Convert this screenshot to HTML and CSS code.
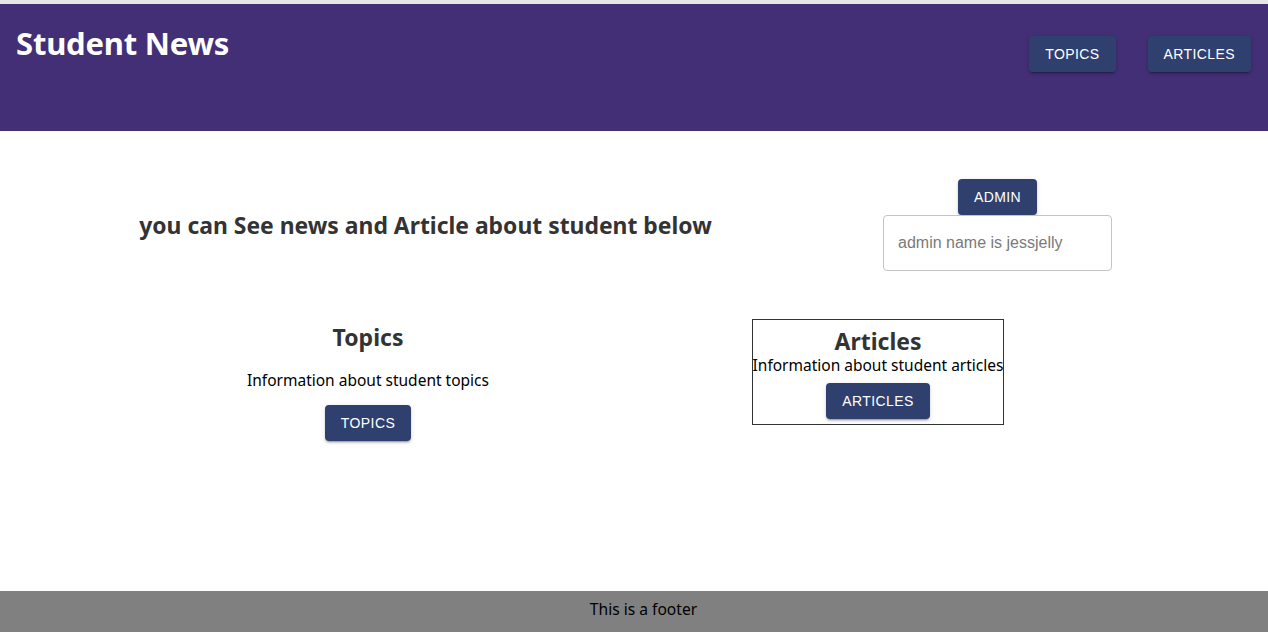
FILE: index.html
```html
<!DOCTYPE html>
<html lang="en">
<head>
<meta charset="utf-8">
<title>Student News</title>
<link rel="stylesheet" href="styles.css">
</head>
<body>
<div class="page">
  <div class="topline"></div>
  <header class="header">
    <h1 class="brand">Student News</h1>
    <nav class="nav">
      <button class="btn">Topics</button>
      <button class="btn">Articles</button>
    </nav>
  </header>
  <main class="main">
    <section class="intro">
      <h3 class="intro-title">you can See news and Article about student below</h3>
      <div class="admin">
        <button class="btn">Admin</button>
        <input class="admin-input" type="text" placeholder="admin name is jessjelly">
      </div>
    </section>
    <section class="cards">
      <div class="card">
        <h2 class="card-title">Topics</h2>
        <p class="card-text">Information about student topics</p>
        <button class="btn">Topics</button>
      </div>
      <div class="card-col">
        <div class="card card-boxed">
          <h2 class="card-title tight">Articles</h2>
          <p class="card-text tight">Information about student articles</p>
          <button class="btn">Articles</button>
        </div>
      </div>
    </section>
  </main>
  <footer class="footer">This is a footer</footer>
</div>
</body>
</html>
```

FILE: styles.css
```css
* { box-sizing: border-box; }
html, body { margin: 0; padding: 0; }
body {
  font-family: "Noto Sans", "Open Sans", sans-serif;
  color: #000;
  background: #fff;
}
.page {
  min-height: 632px;
  display: flex;
  flex-direction: column;
}
.topline {
  height: 4px;
  background: #e6e6e6;
}
.header {
  height: 127px;
  background: #432f75;
  display: flex;
  justify-content: space-between;
  align-items: flex-start;
  padding: 0 17px 0 16px;
}
.brand {
  margin: 21px 0 0;
  color: #fff;
  font-size: 31px;
  font-weight: 700;
  line-height: 36px;
  letter-spacing: -0.2px;
}
.nav {
  display: flex;
  gap: 32px;
  margin-top: 32px;
}
.btn {
  font-family: "Liberation Sans", Arial, sans-serif;
  font-size: 14px;
  font-weight: 400;
  letter-spacing: 0.4px;
  text-transform: uppercase;
  color: #fff;
  background: #2f406f;
  border: 0;
  border-radius: 4px;
  height: 36px;
  padding: 0 16px;
  box-shadow: 0 3px 1px -2px rgba(0,0,0,0.2), 0 2px 2px 0 rgba(0,0,0,0.14), 0 1px 5px 0 rgba(0,0,0,0.12);
  cursor: pointer;
}
.main {
  flex: 1;
}
.intro {
  display: grid;
  grid-template-columns: 573px 229px;
  column-gap: 171px;
  align-items: center;
  padding: 48px 0 0 139px;
}
.intro-title {
  margin: 0;
  text-align: center;
  white-space: nowrap;
  font-size: 22.9px;
  font-weight: 700;
  color: #333;
}
.admin {
  display: flex;
  flex-direction: column;
  align-items: center;
}
.admin-input {
  width: 229px;
  height: 56px;
  border: 1px solid #c4c4c4;
  border-radius: 4px;
  padding: 0 14px;
  font-family: "Liberation Sans", Arial, sans-serif;
  font-size: 16px;
  color: #333;
}
.admin-input::placeholder { color: #7a7a7a; opacity: 1; }
.cards {
  display: grid;
  grid-template-columns: 510px 510px;
  padding: 48px 0 0 113px;
  align-items: start;
}
.card {
  display: flex;
  flex-direction: column;
  align-items: center;
  text-align: center;
}
.card-col {
  display: flex;
  justify-content: center;
}
.card-boxed {
  width: 252px;
  border: 1px solid #333;
  padding: 7px 0 5px;
}
.card-title {
  margin: 3px 0 0;
  font-size: 23px;
  line-height: 30px;
  font-weight: 700;
  color: #333;
}
.card-text {
  margin: 17px 0 14px;
  font-size: 15.5px;
  line-height: 22px;
}
.card-title.tight { margin: 0; line-height: 28px; }
.card-text.tight { margin: 0 0 8px; line-height: 20px; white-space: nowrap; }
.footer {
  height: 41px;
  background: #808080;
  text-align: center;
  font-size: 15.6px;
  line-height: 37px;
  padding-left: 19px;
  color: #000;
}
```
